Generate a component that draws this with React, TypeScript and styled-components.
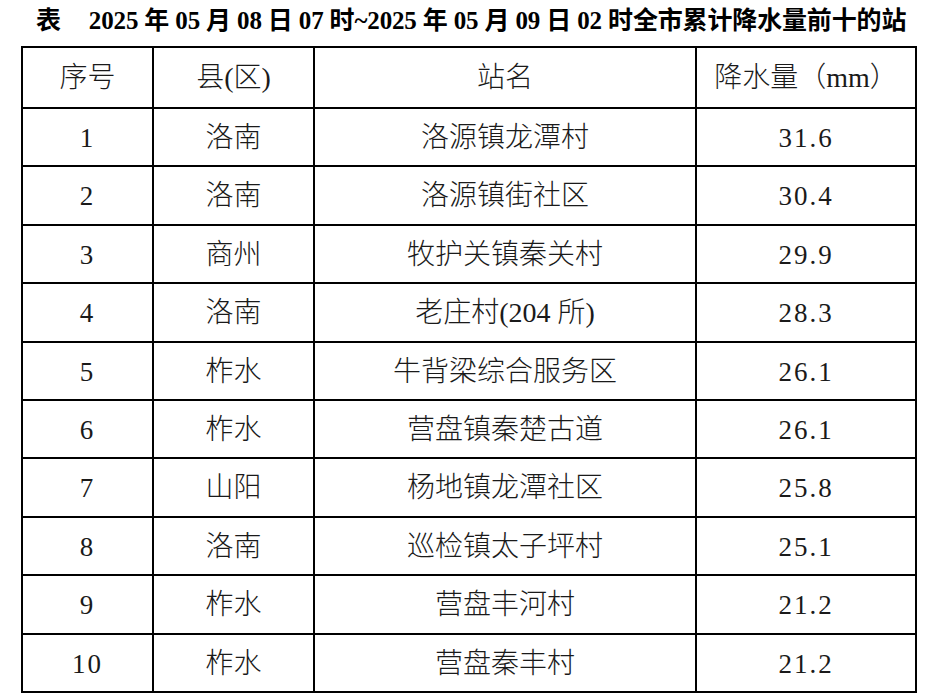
import React from 'react';
import styled, { createGlobalStyle } from 'styled-components';

const GlobalStyle = createGlobalStyle`
  html, body {
    margin: 0;
    padding: 0;
    background: #ffffff;
  }
`;

const Page = styled.div`
  width: 936px;
  height: 699px;
  box-sizing: border-box;
  padding: 3px 0 0 21px;
  background: #ffffff;
  color: #1a1a1a;
`;

const Title = styled.h1`
  margin: 0 0 0 15px;
  height: 43px;
  line-height: 36px;
  font-family: 'Liberation Serif', 'Noto Sans CJK SC', serif;
  font-weight: 700;
  font-size: 25px;
  white-space: nowrap;
  color: #000;
  letter-spacing: -0.15px;
`;

const Gap = styled.span`
  display: inline-block;
  width: 28px;
`;

const Table = styled.table`
  border-collapse: collapse;
  table-layout: fixed;
  width: 894px;
  border: 2px solid #000;
`;

const Cell = styled.td<{ $head?: boolean }>`
  border: 2px solid #000;
  height: ${(p) => (p.$head ? '57px' : '54.4px')};
  padding: 2px 0 0;
  text-align: center;
  vertical-align: middle;
  font-family: 'Liberation Serif', 'Noto Sans CJK SC', serif;
  font-weight: 300;
  font-size: 28px;
  line-height: 1.3;
  color: #1a1a1a;
`;

const Num = styled.span`
  font-size: 27px;
  letter-spacing: 2px;
`;

const rows: [string, string, string, string][] = [
  ['1', '洛南', '洛源镇龙潭村', '31.6'],
  ['2', '洛南', '洛源镇街社区', '30.4'],
  ['3', '商州', '牧护关镇秦关村', '29.9'],
  ['4', '洛南', '老庄村(204 所)', '28.3'],
  ['5', '柞水', '牛背梁综合服务区', '26.1'],
  ['6', '柞水', '营盘镇秦楚古道', '26.1'],
  ['7', '山阳', '杨地镇龙潭社区', '25.8'],
  ['8', '洛南', '巡检镇太子坪村', '25.1'],
  ['9', '柞水', '营盘丰河村', '21.2'],
  ['10', '柞水', '营盘秦丰村', '21.2'],
];

const App: React.FC = () => {
  return (
    <>
      <GlobalStyle />
      <Page>
        <Title>
          表<Gap />2025 年 05 月 08 日 07 时~2025 年 05 月 09 日 02 时全市累计降水量前十的站
        </Title>
        <Table>
          <colgroup>
            <col style={{ width: 131 }} />
            <col style={{ width: 161 }} />
            <col style={{ width: 382 }} />
            <col style={{ width: 220 }} />
          </colgroup>
          <thead>
            <tr>
              <Cell as="th" $head>序号</Cell>
              <Cell as="th" $head>县(区)</Cell>
              <Cell as="th" $head>站名</Cell>
              <Cell as="th" $head>降水量（mm）</Cell>
            </tr>
          </thead>
          <tbody>
            {rows.map(([no, county, station, rain]) => (
              <tr key={no}>
                <Cell><Num>{no}</Num></Cell>
                <Cell>{county}</Cell>
                <Cell>{station}</Cell>
                <Cell><Num>{rain}</Num></Cell>
              </tr>
            ))}
          </tbody>
        </Table>
      </Page>
    </>
  );
};

export default App;
